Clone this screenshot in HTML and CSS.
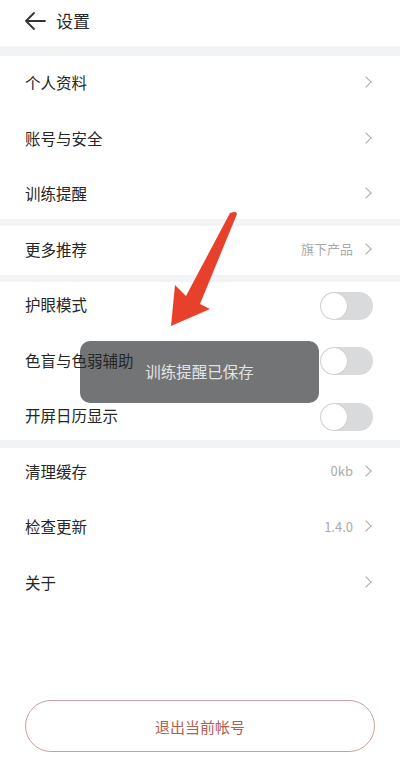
FILE: index.html
```html
<!DOCTYPE html>
<html lang="zh-CN">
<head>
    <meta charset="UTF-8">
    <meta name="viewport" content="width=device-width, initial-scale=1.0">
    <title>设置</title>
    <link rel="stylesheet" href="styles.css">
</head>
<body>
<div class="page">
    <div class="header">
        <svg class="back" width="22" height="20" viewBox="0 0 22 20">
            <path d="M21 10H2M10 2L2 10l8 8" fill="none" stroke="#333" stroke-width="1.8" stroke-linecap="round" stroke-linejoin="round"/>
        </svg>
        <span class="title">设置</span>
    </div>

    <div class="row"><span class="label">个人资料</span><span class="right"><i class="chev"></i></span></div>
    <div class="row"><span class="label">账号与安全</span><span class="right"><i class="chev"></i></span></div>
    <div class="row"><span class="label">训练提醒</span><span class="right"><i class="chev"></i></span></div>
    <div class="gap"></div>
    <div class="row"><span class="label">更多推荐</span><span class="right"><span class="value">旗下产品</span><i class="chev"></i></span></div>
    <div class="gap"></div>
    <div class="row"><span class="label">护眼模式</span><span class="switch"></span></div>
    <div class="row"><span class="label">色盲与色弱辅助</span><span class="switch"></span></div>
    <div class="row"><span class="label">开屏日历显示</span><span class="switch"></span></div>
    <div class="gap wide"></div>
    <div class="row"><span class="label">清理缓存</span><span class="right"><span class="value">0kb</span><i class="chev"></i></span></div>
    <div class="row"><span class="label">检查更新</span><span class="right"><span class="value">1.4.0</span><i class="chev"></i></span></div>
    <div class="row"><span class="label">关于</span><span class="right"><i class="chev"></i></span></div>

    <div class="logout">退出当前帐号</div>

    <!-- toast + annotation arrow lie over the list -->
    <div class="toast">训练提醒已保存</div>
    <svg class="pointer" width="80" height="130" viewBox="0 0 80 130">
        <path d="M67 4 Q69 3 70 6 L33 96 L43 101 L4 118 L8 77 L19 88 L63 5 Z" fill="#e8412b"/>
    </svg>
</div>
</body>
</html>
```

FILE: styles.css
```css
* {
    box-sizing: border-box;
    margin: 0;
    padding: 0;
}
body {
    font-family: "Noto Sans CJK SC", "Noto Sans", sans-serif;
    background-color: #fff;
    color: #333;
}
.page {
    position: relative;
    width: 400px;
    height: 764px;
    display: flex;
    flex-direction: column;
    overflow: hidden;
}
.header {
    flex-shrink: 0;
    height: 56px;
    display: flex;
    align-items: center;
    padding: 0 0 5px 24px;
    gap: 10px;
    border-bottom: 10px solid #f2f3f5;
}
.title {
    font-size: 17px;
    color: #2a2a2a;
}
/* rows keep an even 55.5px pitch, the grey gaps sit over the joins */
.row {
    flex-shrink: 0;
    height: 55.5px;
    display: flex;
    align-items: center;
    justify-content: space-between;
    padding: 0 27px 3px 25px;
}
.gap {
    flex-shrink: 0;
    position: relative;
    z-index: 1;
    height: 7px;
    margin: -3.5px 0;
    background-color: #f2f3f5;
}
.gap.wide {
    height: 8px;
    margin: -5px 0 -3px;
}
.label {
    position: relative;
    z-index: 3;
    font-size: 15.5px;
    color: #262626;
}
.right {
    display: flex;
    align-items: center;
    gap: 9px;
}
.value {
    font-size: 13px;
    color: #aaa;
}
.chev {
    display: block;
    width: 8px;
    height: 8px;
    border-top: 1.4px solid #aaa;
    border-right: 1.4px solid #aaa;
    transform: rotate(45deg);
    margin-right: 3px;
}
.switch {
    position: relative;
    width: 53px;
    height: 28px;
    margin-top: 3px;
    border-radius: 14px;
    background-color: #d9dadc;
}
.switch::after {
    content: "";
    position: absolute;
    left: 1px;
    top: 1px;
    width: 26px;
    height: 26px;
    border-radius: 50%;
    background-color: #fff;
    box-shadow: 0 0 1px rgba(0,0,0,0.25);
}
.logout {
    flex-shrink: 0;
    margin: auto 25px 12px;
    height: 52px;
    border: 1px solid #c9a19a;
    border-radius: 26px;
    display: flex;
    align-items: center;
    justify-content: center;
    font-size: 15px;
    color: #b0604e;
}
.toast {
    position: absolute;
    z-index: 2;
    left: 80px;
    top: 341px;
    width: 239px;
    height: 62px;
    border-radius: 10px;
    background-color: #727475;
    color: #e2e2e2;
    font-size: 15.5px;
    display: flex;
    align-items: center;
    justify-content: center;
    padding-bottom: 2px;
}
.pointer {
    position: absolute;
    z-index: 4;
    left: 167px;
    top: 208px;
}
```
